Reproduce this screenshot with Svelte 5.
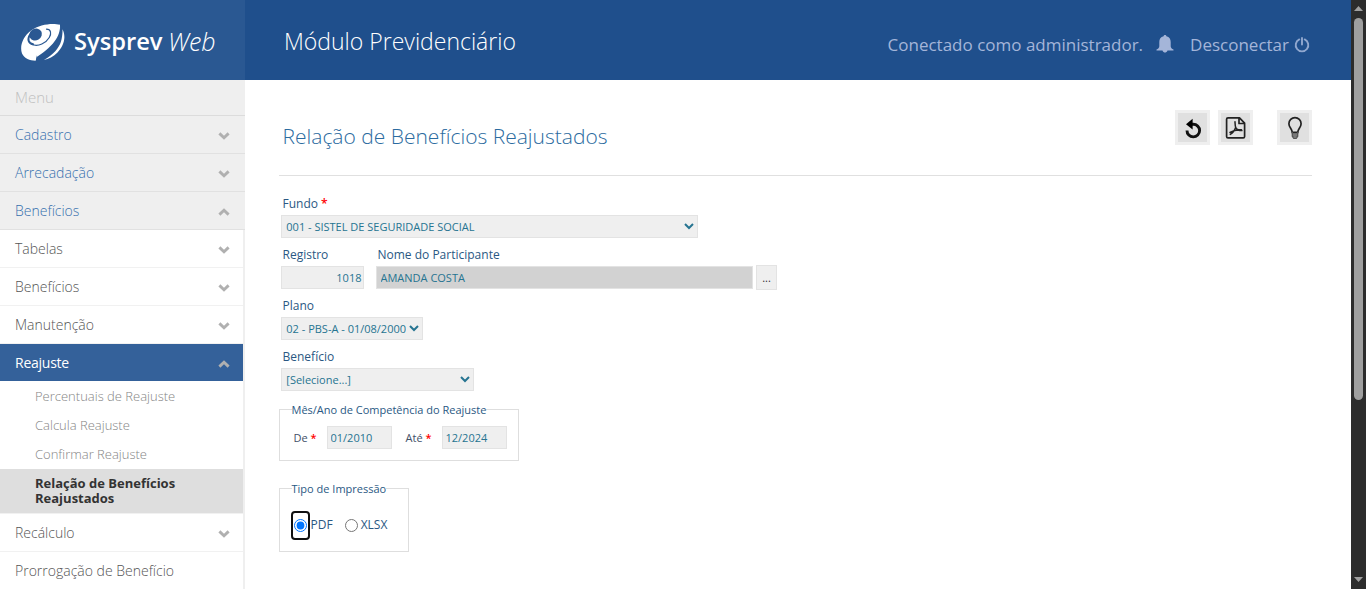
<script>
  const top = [
    { label: 'Cadastro' },
    { label: 'Arrecadação' },
    { label: 'Benefícios', open: true }
  ];
  const groups = [
    { label: 'Tabelas', arrow: true },
    { label: 'Benefícios', arrow: true },
    { label: 'Manutenção', arrow: true },
    {
      label: 'Reajuste',
      arrow: true,
      open: true,
      items: ['Percentuais de Reajuste', 'Calcula Reajuste', 'Confirmar Reajuste', 'Relação de Benefícios Reajustados']
    },
    { label: 'Recálculo', arrow: true },
    { label: 'Prorrogação de Benefício' }
  ];
  let format = $state('PDF');
</script>

{#snippet chevron(open)}
  <svg class="chevron" class:up={open} width="12" height="8" viewBox="0 0 12 8">
    <path d="M1.4 1.4 6 5.7l4.6-4.3" fill="none" stroke="#b0b0b0" stroke-width="2.9" />
  </svg>
{/snippet}

<div class="page">
  <div class="view">
    <header>
      <div class="brand">
        <svg width="46" height="40" viewBox="0 0 46 40">
          <path fill="#fff" d="M39.800 3.800C33 1.800 20 3 11 9.500C2.500 16 -.5 25.500 2 32.500C4.500 37.500 10 39.800 15.800 39.700L17.300 35.300C26 31.500 34.500 25 38 17.500C40 12.500 40.700 8 39.800 3.800Z" />
          <ellipse cx="15.600" cy="13.600" rx="6.500" ry="5.800" transform="rotate(-30 15.600 13.600)" fill="#2a5892" />
          <path d="M10.200 13.500C7 18 8.300 22.500 13 23.300" fill="none" stroke="#2a5892" stroke-width="2" stroke-linecap="round" />
          <path d="M26.500 8.200C31 8.300 31.700 12.500 29.300 16.500C26 22 18.500 26 12 23.500" fill="none" stroke="#2a5892" stroke-width="1.200" stroke-linecap="round" />
          <path fill="#2a5892" d="M40.500 4C38 14 31 25.500 16.700 34.700L15.700 40H22C33 31 39.500 21 41 9Z" />
          <path fill="#fff" d="M42.400 8.300C46.700 16 43.500 25.500 37.500 31.500C33.700 35.500 28.500 38 23.800 39C33.500 33.500 39 27 41 20.500C42.200 16 42.700 12 42.400 8.300Z" />
          <path fill="#fff" d="M39.800 3.800C41 12 36 24 16.700 36L17 34C24 29.500 31 19 34.500 5Z" />
        </svg>
        <span class="name">Sysprev</span><span class="web">Web</span>
      </div>
      <div class="module">Módulo Previdenciário</div>
      <div class="session">
        <span class="who">Conectado como administrador.</span>
        <svg class="bell" width="18" height="18" viewBox="0 0 18 18">
          <path fill="#a4b5d9" d="M9 0c.8 0 1.300.5 1.400 1.200C13.400 1.900 14.700 4.100 14.700 7v4.200c0 1.500 1.200 2.600 2.800 3.300v1H.5v-1c1.600-.7 2.800-1.800 2.800-3.300V7c0-2.900 1.300-5.100 4.300-5.800C7.700.5 8.200 0 9 0ZM6.500 15.500h5C11 17 10 17.500 9 17.500S7 17 6.500 15.500Z" />
        </svg>
        <span class="leave">Desconectar</span>
        <svg class="power" width="16" height="16" viewBox="0 0 16 16" fill="none" stroke="#91a8cf" stroke-width="1.900" stroke-linecap="round">
          <path d="M5.300 2.400a6.300 6.300 0 1 0 5.400 0M8 1v6.500" />
        </svg>
      </div>
    </header>

    <div class="body">
      <nav>
        <div class="caption">Menu</div>
        {#each top as t}
          <div class="top"><span>{t.label}</span>{@render chevron(t.open)}</div>
        {/each}
        <div class="groups">
          {#each groups as g}
            <div class="group" class:active={g.open}>
              <span>{g.label}</span>
              {#if g.arrow}{@render chevron(g.open)}{/if}
            </div>
            {#if g.items}
              <div class="subs">
                {#each g.items as s, i}
                  <div class="sub" class:current={i === g.items.length - 1}>{s}</div>
                {/each}
              </div>
            {/if}
          {/each}
        </div>
      </nav>

      <main>
        <div class="heading">
          <h1>Relação de Benefícios Reajustados</h1>
          <div class="tools">
            <button aria-label="Limpar">
              <svg width="29" height="29" viewBox="0 0 29 29">
                <path d="M9 17.500A6.300 6.300 0 1 0 15.200 11.300H13.500" fill="none" stroke="#111" stroke-width="2.900" />
                <path d="M8 11.200 14.600 5.800V16.500Z" fill="#000" />
              </svg>
            </button>
            <button aria-label="Gerar PDF">
              <svg width="29" height="29" viewBox="0 0 29 29" fill="none" stroke="#222" stroke-linejoin="round">
                <path stroke-width="1.700" d="M7 4.900h11.500l5.100 5.200v13.300a1.400 1.400 0 0 1-1.400 1.400H7a1.400 1.400 0 0 1-1.400-1.400V6.300A1.400 1.400 0 0 1 7 4.900ZM18 5v5.500h5.500" />
                <path stroke-width="1.500" stroke-linecap="round" d="M14 8.700c.1 2.800 0 4.300.9 6.300 1 1.600 3.300 2.500 6 2.600M14.700 14.200c-1 3-2.800 5.800-5.400 7.200M9 19.500c2.500-1.600 7.500-3.100 11.500-2.800" />
              </svg>
            </button>
            <button class="tip" aria-label="Ajuda">
              <svg width="29" height="29" viewBox="0 0 29 29" fill="none" stroke="#222">
                <path stroke-width="1.700" d="M12.200 19.300C12.200 16 8.900 14.500 8.900 10.700a6.100 6.100 0 0 1 12.200 0C21.100 14.500 17.800 16 17.800 19.300Z" />
                <path stroke="#555" stroke-width="1.300" d="M12.300 19v4.300l1.500 2h2.400l1.500-2V19M12.300 21h5.400M12.500 23h5M13.500 25H16.500" />
              </svg>
            </button>
          </div>
        </div>

        <form>
          <div class="field">
            <label for="fundo">Fundo <b>*</b></label>
            <select id="fundo" style:width="417px"><option>001 - SISTEL DE SEGURIDADE SOCIAL</option></select>
          </div>
          <div class="pair">
            <div class="field reg">
              <label for="registro">Registro</label>
              <input id="registro" class="num" value="1018" />
            </div>
            <div class="field person">
              <label for="nome">Nome do Participante</label>
              <input id="nome" readonly value="AMANDA COSTA" />
            </div>
            <button type="button" class="more">...</button>
          </div>
          <div class="field">
            <label for="plano">Plano</label>
            <select id="plano" style:width="142px"><option>02 - PBS-A - 01/08/2000</option></select>
          </div>
          <div class="field">
            <label for="beneficio">Benefício</label>
            <select id="beneficio" style:width="193px"><option>[Selecione...]</option></select>
          </div>

          <div class="box period">
            <div class="legend"><span>Mês/Ano de Competência do Reajuste</span></div>
            <div class="range">
              <label class="from" for="de">De <b>*</b></label><input id="de" value="01/2010" />
              <label class="to" for="ate">Até <b>*</b></label><input id="ate" value="12/2024" />
            </div>
          </div>

          <div class="box print">
            <div class="legend"><span>Tipo de Impressão</span></div>
            <div class="options">
              <span class="focus"><input type="radio" id="pdf" value="PDF" bind:group={format} /></span>
              <label for="pdf">PDF</label>
              <input class="second" type="radio" id="xlsx" value="XLSX" bind:group={format} />
              <label for="xlsx">XLSX</label>
            </div>
          </div>
        </form>
      </main>
    </div>
  </div>

  <div class="scroll">
    <svg width="9" height="5" viewBox="0 0 9 5"><path d="M4.500 0 9 5H0Z" fill="#a0a0a0" /></svg>
    <div class="thumb"></div>
    <svg class="down" width="9" height="5" viewBox="0 0 9 5"><path d="M4.500 5 9 0H0Z" fill="#a0a0a0" /></svg>
  </div>
</div>

<style>
  :global(body) { overflow: hidden; }
  .page, .page * { box-sizing: border-box; }
  .page {
    display: flex;
    width: 1366px;
    height: 589px;
    overflow: hidden;
    background: #fff;
    font-family: 'Open Sans', 'Noto Sans', sans-serif;
    color: #2a5883;
  }
  svg { display: block; flex: none; }
  button, input, select { font-family: inherit; margin: 0; }
  .view { width: 1351px; height: 589px; }
  header { display: flex; height: 80px; background: #1f4f8c; white-space: nowrap; }
  .brand { display: flex; align-items: center; width: 245px; padding: 1px 0 0 20px; background: #2a5892; color: #fff; line-height: 30px; }
  .name { margin-left: 8px; width: 94px; font-size: 23.700px; font-weight: 600; }
  .web { font-size: 25px; font-weight: 300; font-style: italic; }
  .module { padding: 25px 0 0 39px; line-height: 32px; font-size: 23px; font-weight: 300; color: #fff; flex: 1; }
  .session { display: flex; padding-right: 41px; color: #a4b5d9; font-size: 17px; line-height: 24px; padding-top: 33px; }
  .bell { margin: 2px 16px 0 13px; }
  .power { margin: 4px 0 0 5px; }

  .body { display: flex; height: 509px; }
  nav { width: 245px; height: 509px; overflow: hidden; background: #efefef; font-size: 14px; font-weight: 300; white-space: nowrap; }
  .caption { height: 36px; padding-left: 15px; line-height: 34px; font-size: 15px; color: #c0c0c0; border-bottom: 1px solid #dcdcdc; }
  .top, .group { display: flex; justify-content: space-between; height: 38px; padding: 0 15px; line-height: 37px; }
  .top { color: #3670ae; border-bottom: 1px solid #e1e1e1; }
  .chevron { margin-top: 16px; }
  .up { transform: scaleY(-1); }
  .groups { width: 243px; background: #fff; height: 359px; }
  .group { color: #555; padding-right: 13px; border-bottom: 1px solid #f1f1f1; }
  .group.active { background: #34619a; color: #fff; height: 37px; border: 0; }
  .group.active span { font-weight: 400; letter-spacing: -0.25px; }
  .subs { padding-top: 1px; border-bottom: 1px solid #f1f1f1; font-size: 13px; }
  .sub { height: 29px; padding-left: 35px; line-height: 29px; color: #858585; }
  .sub.current { height: 44px; padding: 7px 50px 0 35px; line-height: 15px; background: #dedede; color: #333; font-weight: 700; white-space: normal; }

  main { padding-left: 34px; width: 1067px; }
  .heading { display: flex; justify-content: space-between; height: 96px; padding-top: 30px; border-bottom: 1px solid #e0e0e0; }
  h1 { margin: 10px 0 0 3.500px; font-size: 21px; line-height: 32px; font-weight: 300; color: #2b6ba0; }
  .tools { display: flex; gap: 8px; }
  .tools button { width: 35px; height: 35px; padding: 0; border: 3px solid #efefef; background: #e0e0e0; }
  .tools .tip { margin-left: 16px; }

  form { padding-top: 11px; }
  .field { height: 51px; padding: 5px 0 0 2px; }
  .field label { display: block; height: 23px; padding-left: 1.500px; line-height: 23px; font-size: 12px; white-space: nowrap; }
  b { color: #f00; font-weight: 600; font-size: 11px; }
  .field b { font-size: 12px; }
  select, .field input, .range input {
    display: block;
    height: 23px;
    border: 1px solid #e3e3e3;
    border-radius: 0;
    background: #efefef;
    color: #267491;
    font-size: 11px;
    outline: none;
    padding: 0 3.500px;
  }
  .field select { padding: 0 0 0 0.300px; }
  .pair { display: flex; height: 51px; }
  .reg { width: 95px; }
  .field .num { width: 83px; text-align: right; padding: 0 1.500px; }
  .field #nome { width: 377px; background: #d2d2d2; }
  .more { width: 21px; height: 25px; margin: 27px 0 0 3px; padding: 0; border: 1px solid #e3e3e3; background: #efefef; color: #333; font-size: 11px; }

  .box { border: 1px solid #dedede; }
  .legend { display: flex; height: 16px; margin: -8px 0 0 11.500px; line-height: 16px; font-size: 11px; white-space: nowrap; }
  .legend span { background: #fff; }
  .period { width: 240px; height: 52px; margin-top: 18px; }
  .range { display: flex; margin-top: 8px; font-size: 11px; line-height: 23px; color: #3f5068; }
  .range input { width: 65px; padding: 0 2.500px; }
  .from { width: 33.500px; margin-left: 13.500px; }
  .to { width: 36.500px; margin-left: 13.500px; }
  .print { width: 130px; height: 64px; margin-top: 27px; }
  .options { display: flex; align-items: center; height: 29px; margin: 14px 0 0 11px; font-size: 12px; }
  .options label { padding-bottom: 2px; }
  .options input { width: 13px; height: 13px; outline: none; }
  .focus { display: flex; align-items: center; justify-content: center; width: 19px; height: 29px; border: 2px solid #101010; border-radius: 4px; margin-right: 0.500px; }
  .options .second { margin: 0 3px 0 12px; }

  .scroll { display: flex; flex-direction: column; align-items: center; width: 15px; height: 589px; padding: 6px 0 7px; background: #2c2c2c; }
  .thumb { width: 9px; height: 382px; margin-top: 7px; border-radius: 5px; background: #9f9f9f; }
  .down { margin-top: auto; }
</style>
